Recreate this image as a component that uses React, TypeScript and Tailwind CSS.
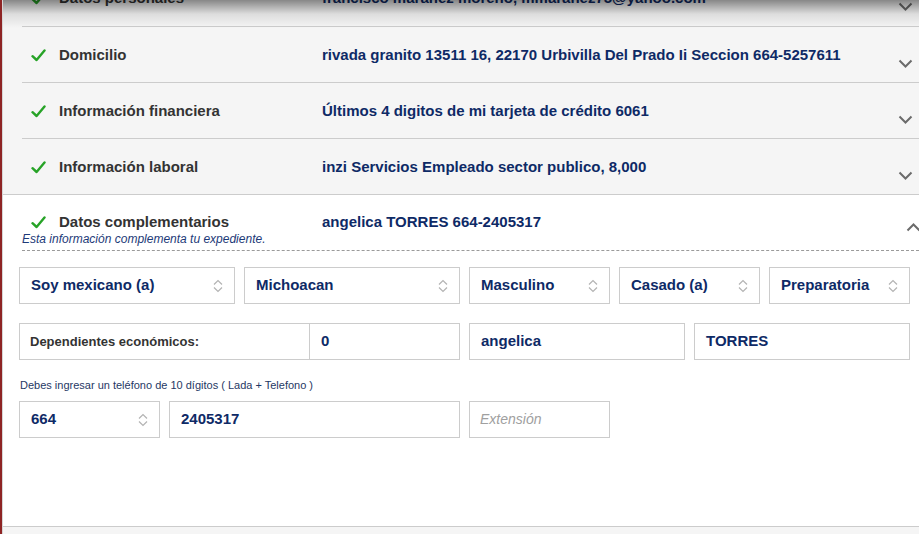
import React from "react";

const navy = "text-[#0e2a66]";

function Check() {
  return (
    <svg width="15" height="13" viewBox="0 0 15 13" className="shrink-0">
      <path d="M1.5 7.2 L5.6 11 L13.5 1.5" fill="none" stroke="#27a327" strokeWidth="2.4" strokeLinecap="round" strokeLinejoin="round" />
    </svg>
  );
}

function Chevron({ up = false }: { up?: boolean }) {
  return (
    <svg width="15" height="9" viewBox="0 0 15 9" className="shrink-0">
      <path
        d={up ? "M1.5 7.5 L7.5 1.5 L13.5 7.5" : "M1.5 1.5 L7.5 7.5 L13.5 1.5"}
        fill="none"
        stroke="#6b6b6b"
        strokeWidth="2"
      />
    </svg>
  );
}

function SortIcon() {
  return (
    <svg width="10" height="14" viewBox="0 0 10 14" className="shrink-0">
      <path d="M1 5.5 L5 1.5 L9 5.5" fill="none" stroke="#b3b3b3" strokeWidth="1.2" />
      <path d="M1 8.5 L5 12.5 L9 8.5" fill="none" stroke="#b3b3b3" strokeWidth="1.2" />
    </svg>
  );
}

function Row({ label, value, first = false }: { label: string; value: string; first?: boolean }) {
  return (
    <div className={`ml-[19px] flex h-[56px] shrink-0 items-start ${first ? "-mt-[30px]" : "border-t border-[#cccccc]"}`}>
      <div className="flex items-center pl-[9px] pt-[19px] text-[15px] leading-[18px]">
        <Check />
        <span className="ml-[13px] w-[263px] font-bold text-[#333333]">{label}</span>
        <span className={`font-bold ${navy} whitespace-nowrap`}>{value}</span>
      </div>
      <div className="ml-auto mr-[6px] mt-[32px]">
        <Chevron />
      </div>
    </div>
  );
}

function Select({ w, text }: { w: string; text: string }) {
  return (
    <div className={`${w} flex h-[37px] items-center justify-between border border-[#cccccc] bg-white pl-[11px] pr-[11px]`}>
      <span className={`text-[15px] font-bold ${navy}`}>{text}</span>
      <SortIcon />
    </div>
  );
}

function Field({ w, text, className = "" }: { w: string; text: string; className?: string }) {
  return (
    <div className={`${w} flex h-[37px] items-center border border-[#cccccc] bg-white pl-[11px] ${className}`}>
      <span className={`text-[15px] font-bold ${navy}`}>{text}</span>
    </div>
  );
}

export default function App() {
  return (
    <div
      className="relative flex h-[534px] w-[919px] overflow-hidden bg-[#f5f5f5]"
      style={{ fontFamily: '"Liberation Sans", Arial, sans-serif' }}
    >
      <div className="w-[2px] shrink-0 bg-[#8e2424]" />
      <div className="w-[1px] shrink-0 bg-[#d6d6d6]" />
      <div className="flex min-w-0 flex-1 flex-col">
        <Row first label="Datos personales" value="francisco maranez moreno, mmaranez75@yahoo.com" />
        <Row label="Domicilio" value="rivada granito 13511 16, 22170 Urbivilla Del Prado Ii Seccion 664-5257611" />
        <Row label="Información financiera" value="Últimos 4 digitos de mi tarjeta de crédito 6061" />
        <Row label="Información laboral" value="inzi Servicios Empleado sector publico, 8,000" />

        <div className="flex h-[333px] shrink-0 flex-col border-t border-b border-[#cccccc] bg-white">
          <div className="ml-[19px] flex h-[37px] items-start pt-[18px]">
            <div className="flex items-center pl-[9px] text-[15px] leading-[18px]">
              <Check />
              <span className="ml-[13px] w-[263px] font-bold text-[#333333]">Datos complementarios</span>
              <span className={`font-bold ${navy}`}>angelica TORRES 664-2405317</span>
            </div>
            <div className="ml-auto -mr-[2px] mt-[10px]">
              <Chevron up />
            </div>
          </div>
          <div className="ml-[19px] border-b border-dashed border-[#9a9a9a] pb-[4px] text-[12px] italic leading-[14px] text-[#1d3a78]">
            Esta información complementa tu expediente.
          </div>

          <div className="ml-[16px] mt-[16px] flex gap-[9px]">
            <Select w="w-[216px]" text="Soy mexicano (a)" />
            <Select w="w-[216px]" text="Michoacan" />
            <Select w="w-[141px]" text="Masculino" />
            <Select w="w-[141px]" text="Casado (a)" />
            <Select w="w-[141px]" text="Preparatoria" />
          </div>

          <div className="ml-[16px] mt-[19px] flex gap-[9px]">
            <div className="flex">
              <div className="flex h-[37px] w-[291px] items-center border border-[#cccccc] pl-[10px]">
                <span className="text-[13px] font-bold text-[#333333]">Dependientes económicos:</span>
              </div>
              <Field w="w-[150px]" text="0" className="border-l-0 pl-[10px]" />
            </div>
            <Field w="w-[216px]" text="angelica" />
            <Field w="w-[216px]" text="TORRES" />
          </div>

          <div className="ml-[17px] mt-[19px] text-[11px] leading-[13px] text-[#1f3864]">
            Debes ingresar un teléfono de 10 dígitos ( Lada + Telefono )
          </div>

          <div className="ml-[16px] mt-[9px] flex gap-[9px]">
            <Select w="w-[141px]" text="664" />
            <Field w="w-[291px]" text="2405317" />
            <div className="flex h-[37px] w-[141px] items-center border border-[#cccccc] bg-white pl-[10px]">
              <span className="text-[14px] italic text-[#a0a0a0]">Extensión</span>
            </div>
          </div>
        </div>
      </div>

      <div className="pointer-events-none absolute left-[3px] right-0 top-0 h-[28px] bg-gradient-to-b from-black/45 via-black/10 to-transparent" />
    </div>
  );
}
